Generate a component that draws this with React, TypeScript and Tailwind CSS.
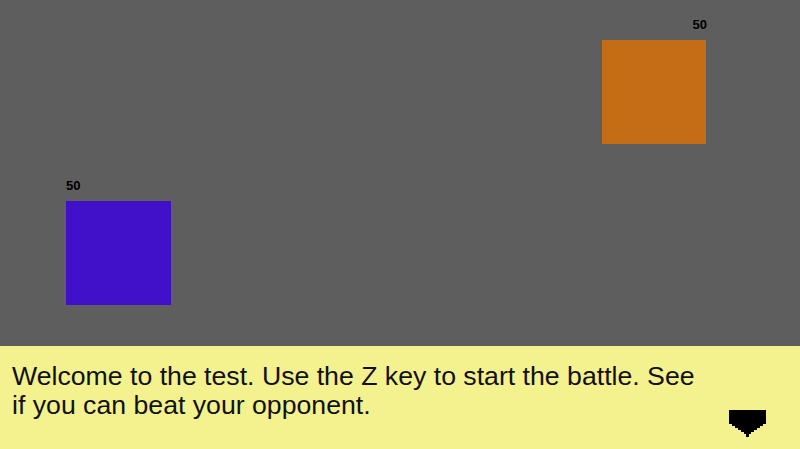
import React from "react";

function Fighter({ color, align }: { color: string; align: "start" | "end" }) {
  return (
    <div className={align === "end" ? "flex flex-col items-end" : "flex flex-col items-start"}>
      <div className="text-[13px] leading-[13px] font-bold text-black mb-[9px] mr-[-1px]">50</div>
      <div className={color} />
    </div>
  );
}

export default function App() {
  return (
    <div
      className="w-[800px] h-[449px] flex flex-col bg-[#5e5e5e] overflow-hidden"
      style={{ fontFamily: '"Liberation Sans", Arial, sans-serif' }}
    >
      <div className="relative h-[346px] shrink-0">
        <div className="absolute left-[602px] top-[18px]">
          <Fighter color="w-[104px] h-[104px] bg-[#c56c16]" align="end" />
        </div>
        <div className="absolute left-[66px] top-[179px]">
          <Fighter color="w-[105px] h-[104px] bg-[#4110c9]" align="start" />
        </div>
      </div>
      <div className="relative flex-1 bg-[#f4f28f] pt-[16px] pl-[12px]">
        <p className="w-[692px] text-[26.67px] leading-[29px] text-[#111]">
          Welcome to the test. Use the Z key to start the battle. See if you can beat your opponent.
        </p>
        <svg
          className="absolute right-[34px] top-[64px]"
          width="37"
          height="27"
          viewBox="0 0 37 27"
          shapeRendering="crispEdges"
        >
          <path
            d="M0 0 H37 V14 H34 V16 H31 V18 H28 V20 H25 V22 H22 V24 H20 V27 H17 V24 H15 V22 H12 V20 H9 V18 H6 V16 H3 V14 H0 Z"
            fill="#000"
          />
        </svg>
      </div>
    </div>
  );
}
